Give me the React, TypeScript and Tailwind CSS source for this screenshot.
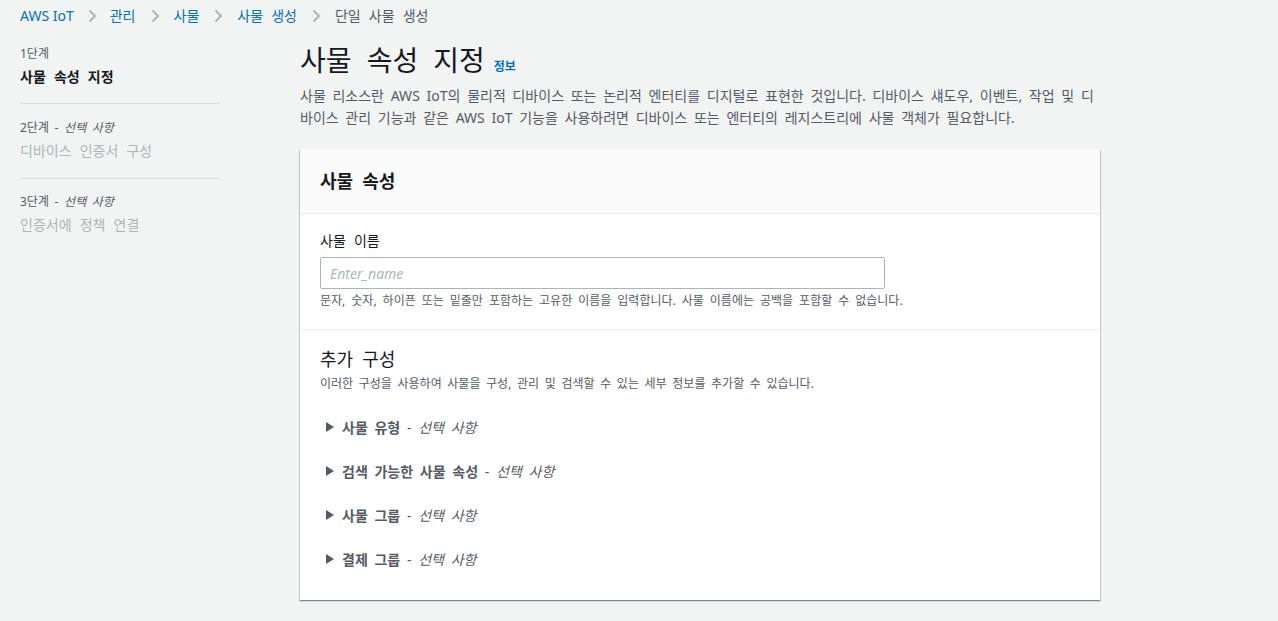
import { useState } from "react";

const font = { fontFamily: '"Noto Sans", "Noto Sans CJK KR", sans-serif', wordSpacing: "0.28em" };
const small = { wordSpacing: "0.21em" };

function Chevron({ first }: { first?: boolean }) {
  return (
    <svg width="16" height="16" viewBox="0 0 16 16" className={first ? "mx-[10px] shrink-0" : "mx-[11px] shrink-0"}>
      <path d="M5.5 2.5 L11 8 L5.5 13.5" fill="none" stroke="#aab7b8" strokeWidth="2" />
    </svg>
  );
}

function Expander({ title }: { title: string }) {
  return (
    <div className="flex h-[44px] items-center text-[14px] text-[#545b64]" style={{ wordSpacing: "0.22em" }}>
      <svg width="10" height="12" viewBox="0 0 10 12" className="ml-[5px] mr-[7px] shrink-0">
        <path d="M1 1 L9 6 L1 11 Z" fill="#545b64" />
      </svg>
      <span className="whitespace-pre">
        <span className="font-bold">{title}</span> - <span className="italic">선택 사항</span>
      </span>
    </div>
  );
}

export default function App() {
  const [name, setName] = useState("");

  return (
    <div className="min-h-[621px] bg-[#f2f3f3] text-[#16191f]" style={font}>
      <nav className="flex h-[32px] items-center px-5 text-[14px] leading-[20px]">
        <a className="text-[#0073bb]" style={{ wordSpacing: "0" }}>AWS IoT</a>
        <Chevron first />
        <a className="text-[#0073bb]">관리</a>
        <Chevron />
        <a className="text-[#0073bb]">사물</a>
        <Chevron />
        <a className="text-[#0073bb]">사물 생성</a>
        <Chevron />
        <span className="text-[#545b64]">단일 사물 생성</span>
      </nav>

      <div className="flex">
        <aside className="ml-5 w-[200px] shrink-0 pt-[12px]">
          <div className="pb-[13px]">
            <div className="text-[12px] leading-[20px] text-[#545b64]">1단계</div>
            <div className="text-[14px] font-bold leading-[26px] text-[#16191f]">사물 속성 지정</div>
          </div>
          <div className="border-t border-[#d5dbdb] pb-[14px] pt-[14px]">
            <div className="text-[12px] leading-[20px] text-[#545b64]" style={small}>
              2단계 - <span className="italic">선택 사항</span>
            </div>
            <div className="text-[14px] leading-[26px] text-[#aab7b8]">디바이스 인증서 구성</div>
          </div>
          <div className="border-t border-[#d5dbdb] pt-[13px]">
            <div className="text-[12px] leading-[20px] text-[#545b64]" style={small}>
              3단계 - <span className="italic">선택 사항</span>
            </div>
            <div className="text-[14px] leading-[26px] text-[#aab7b8]">인증서에 정책 연결</div>
          </div>
        </aside>

        <main className="ml-[80px] w-[800px] pt-[8px]">
          <div className="flex items-baseline">
            <h1 className="text-[28px] leading-[40px] text-[#16191f]" style={{ wordSpacing: "0.28em" }}>
              사물 속성 지정
            </h1>
            <a className="ml-[9px] text-[12px] font-bold text-[#0073bb]">정보</a>
          </div>
          <p className="mt-[5px] text-[14px] leading-[22px] text-[#545b64]" style={{ wordSpacing: "0.22em" }}>
            사물 리소스란 AWS IoT의 물리적 디바이스 또는 논리적 엔터티를 디지털로 표현한 것입니다. 디바이스 섀도우, 이벤트, 작업 및 디바이스 관리 기능과 같은 AWS IoT 기능을 사용하려면 디바이스 또는 엔터티의 레지스트리에 사물 객체가 필요합니다.
          </p>

          <section className="mt-[20px] bg-white shadow-[0_1px_1px_0_rgba(0,28,36,0.3),1px_1px_1px_0_rgba(0,28,36,0.15),-1px_1px_1px_0_rgba(0,28,36,0.15)]">
            <header className="flex h-[65px] items-center border-b border-[#eaeded] bg-[#fafafa] px-5">
              <h2 className="text-[18px] font-bold leading-[24px]">사물 속성</h2>
            </header>

            <div className="border-b border-[#eaeded] px-5 pb-[19px] pt-[16px]">
              <label className="block text-[14px] leading-[22px] text-[#16191f]">사물 이름</label>
              <input
                value={name}
                onChange={(e) => setName(e.target.value)}
                placeholder="Enter_name"
                className="mt-[5px] h-[32px] w-[565px] rounded-[2px] border border-[#aab7b8] px-[9px] text-[14px] outline-none placeholder:italic placeholder:text-[#aab7b8]"
                style={font}
              />
              <p className="mt-[3px] text-[12px] leading-[18px] text-[#545b64]" style={{ wordSpacing: "0.24em" }}>
                문자, 숫자, 하이픈 또는 밑줄만 포함하는 고유한 이름을 입력합니다. 사물 이름에는 공백을 포함할 수 없습니다.
              </p>
            </div>

            <div className="px-5 pb-[19px] pt-[16px]">
              <h3 className="text-[18px] leading-[26px] text-[#16191f]">추가 구성</h3>
              <p className="mt-[3px] text-[12px] leading-[18px] text-[#545b64]" style={small}>
                이러한 구성을 사용하여 사물을 구성, 관리 및 검색할 수 있는 세부 정보를 추가할 수 있습니다.
              </p>
              <div className="mt-[12px]">
                <Expander title="사물 유형" />
                <Expander title="검색 가능한 사물 속성" />
                <Expander title="사물 그룹" />
                <Expander title="결제 그룹" />
              </div>
            </div>
          </section>
        </main>
      </div>
    </div>
  );
}
